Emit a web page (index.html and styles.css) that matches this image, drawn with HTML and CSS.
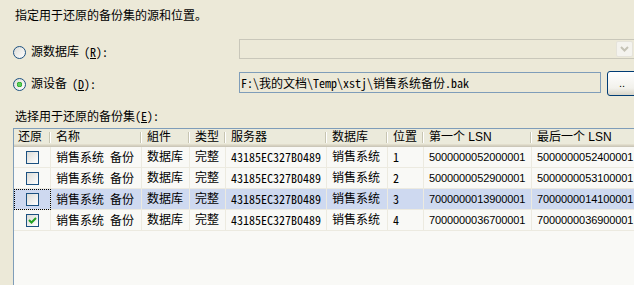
FILE: index.html
```html
<!DOCTYPE html>
<html lang="zh-CN">
<head>
  <meta charset="UTF-8">
  <title>还原数据库 - 常规</title>
  <link rel="stylesheet" href="styles.css">
</head>
<body>
  <div class="page">
    <p class="intro">指定用于还原的备份集的源和位置。</p>

    <div class="src-row first">
      <label class="choice"><span class="radio"></span>源数据库<span class="mono">(<u>R</u>):</span></label>
      <div class="combo">
        <span class="combo-btn">
          <svg width="9" height="6" viewBox="0 0 9 6"><path d="M1 1 L4.5 4.5 L8 1" fill="none" stroke="#C5C3B6" stroke-width="2"/></svg>
        </span>
      </div>
    </div>

    <div class="src-row second">
      <label class="choice"><span class="radio on"></span>源设备<span class="mono">(<u>D</u>):</span></label>
      <div class="path-box mono">F:\我的文档\Temp\xstj\销售系统备份.bak</div>
      <button class="browse">..</button>
    </div>

    <p class="sets-label">选择用于还原的备份集<span class="mono">(<u>E</u>):</span></p>

    <div class="list">
      <div class="cols head">
        <span>还原</span><span>名称</span><span>組件</span><span>类型</span><span>服务器</span><span>数据库</span><span>位置</span><span>第一个 LSN</span><span>最后一个 LSN</span>
      </div>

      <div class="cols row">
        <span class="chk-cell"><i class="check"></i></span>
        <span class="mono">销售系统 备份</span><span>数据库</span><span>完整</span>
        <span class="mono">43185EC327B0489</span><span>销售系统</span><span class="mono">1</span>
        <span class="lsn">5000000052000001</span><span class="lsn">5000000052400001</span>
      </div>
      <div class="cols row">
        <span class="chk-cell"><i class="check"></i></span>
        <span class="mono">销售系统 备份</span><span>数据库</span><span>完整</span>
        <span class="mono">43185EC327B0489</span><span>销售系统</span><span class="mono">2</span>
        <span class="lsn">5000000052900001</span><span class="lsn">5000000053100001</span>
      </div>
      <div class="cols row sel">
        <span class="chk-cell focus"><i class="check"></i></span>
        <span class="mono">销售系统 备份</span><span>数据库</span><span>完整</span>
        <span class="mono">43185EC327B0489</span><span>销售系统</span><span class="mono">3</span>
        <span class="lsn">7000000013900001</span><span class="lsn">7000000014100001</span>
      </div>
      <div class="cols row">
        <span class="chk-cell"><i class="check on"><svg width="11" height="11" viewBox="0 0 11 11"><path d="M2 5 L4.5 7.5 L9 3" fill="none" stroke="#21A121" stroke-width="2"/></svg></i></span>
        <span class="mono">销售系统 备份</span><span>数据库</span><span>完整</span>
        <span class="mono">43185EC327B0489</span><span>销售系统</span><span class="mono">4</span>
        <span class="lsn">7000000036700001</span><span class="lsn">7000000036900001</span>
      </div>
    </div>
  </div>
</body>
</html>
```

FILE: styles.css
```css
html, body {
  margin: 0;
  height: 285px;
  overflow: hidden;
}

body {
  background-color: #ECE9D8;
  color: #000;
  font-family: "Liberation Sans", "Noto Sans CJK SC", sans-serif;
  font-size: 12px;
}

.page {
  padding-left: 13px;
}

.mono {
  font-family: "Noto Sans Mono CJK SC", "Liberation Mono", "Noto Sans CJK SC", monospace;
}

.intro {
  margin: 0;
  padding: 8px 0 0 2px;
  line-height: 17px;
}

/* source rows */
.src-row {
  display: flex;
  align-items: flex-start;
}

.src-row > * {
  flex: none;
}

.src-row.first {
  margin-top: 14px;
  height: 20px;
}

.src-row.second {
  margin-top: 12px;
  height: 25px;
}

.choice {
  display: flex;
  align-items: center;
  gap: 5px;
  width: 226px;
  line-height: 14px;
  margin-top: 6px;
}

.radio {
  box-sizing: border-box;
  width: 13px;
  height: 13px;
  border-radius: 50%;
  border: 1px solid #1C5180;
  background: linear-gradient(135deg, #DCDCD7, #FFFFFF);
}

.radio.on {
  background:
    radial-gradient(circle, #5FCF5F 0 1.5px, #21A121 2.5px, transparent 3px),
    linear-gradient(135deg, #DCDCD7, #FFFFFF);
}

.combo {
  box-sizing: border-box;
  width: 396px;
  height: 20px;
  border: 1px solid #C9C7BA;
  display: flex;
  justify-content: flex-end;
  padding: 1px;
}

.combo-btn {
  box-sizing: border-box;
  width: 17px;
  border: 1px solid #E5E3DA;
  border-radius: 2px;
  background: #F4F3EE;
  display: flex;
  align-items: center;
  justify-content: center;
}

.path-box {
  box-sizing: border-box;
  width: 362px;
  height: 21px;
  margin-top: 1px;
  border: 1px solid #7F9DB9;
  padding-left: 1px;
  line-height: 19px;
  white-space: nowrap;
}

.browse {
  box-sizing: border-box;
  width: 30px;
  height: 25px;
  margin-left: 6px;
  border: 1px solid #003C74;
  border-radius: 3px;
  background: linear-gradient(to bottom, #FFFFFF, #F2F1EB 70%, #D8D5C8);
  font-family: "Liberation Sans", sans-serif;
  font-size: 11px;
  padding: 0 0 2px;
}

.sets-label {
  margin: 12px 0 0 2px;
  line-height: 16px;
}

/* backup set list */
.list {
  margin-top: 3px;
  width: 640px;
  height: 170px;
  border-top: 1px solid #7F9DB9;
  border-left: 1px solid #7F9DB9;
  background-color: #F9F9F6;
}

.cols {
  display: grid;
  grid-template-columns: 37px 91px 48px 36px 101px 61px 36px 108px 122px;
}

.cols > span {
  white-space: nowrap;
  overflow: hidden;
  padding-left: 5px;
}

.head {
  height: 18px;
  background: linear-gradient(to bottom, #EBEADB 0 15px, #E2DECD 15px 16px, #D6D2C2 16px 17px, #CBC7B8 17px);
}

.head > span {
  line-height: 16px;
  background:
    linear-gradient(#C7C5B2, #C7C5B2) no-repeat right 1px top 3px / 1px 11px,
    linear-gradient(#FFFFFF, #FFFFFF) no-repeat right 0 top 3px / 1px 11px;
}

.head > span:first-child {
  padding-left: 4px;
}

.row {
  height: 21px;
}

.row > span {
  line-height: 20px;
  border-right: 1px solid #ECEAE0;
  border-bottom: 1px solid #ECEAE0;
}

.row.sel > span {
  background-color: #CED9F0;
}

.lsn {
  letter-spacing: -0.1px;
  font-size: 11px;
}

.chk-cell {
  display: flex;
  align-items: center;
}

.row > .chk-cell {
  padding-left: 12px;
}

.chk-cell.focus {
  outline: 1px dotted #000;
  outline-offset: -1px;
}

.check {
  box-sizing: border-box;
  width: 13px;
  height: 13px;
  border: 1px solid #1C5180;
  background: linear-gradient(135deg, #DCDCD7, #FFFFFF);
  display: flex;
}

.check svg {
  display: block;
}
```
